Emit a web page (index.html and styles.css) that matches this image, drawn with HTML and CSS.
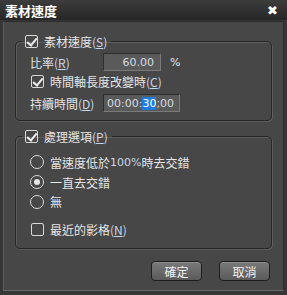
FILE: index.html
```html
<!DOCTYPE html>
<html lang="zh-Hant">
<head>
  <meta charset="UTF-8" />
  <title>素材速度</title>
  <link rel="stylesheet" href="styles.css">
</head>
<body>

<div class="dialog">
  <div class="titlebar">
    <span class="title">素材速度</span>
    <span class="close">&#10006;</span>
  </div>

  <div class="body">
    <!-- speed group -->
    <fieldset class="group group-speed">
      <legend><span class="check on"></span>素材速度<span class="key">(<u>S</u>)</span></legend>
      <div class="row first">
        <span class="label">比率<span class="key">(<u>R</u>)</span></span>
        <span class="field rate">60.00</span>
        <span class="unit">%</span>
      </div>
      <div class="row check-row">
        <span class="check on"></span>時間軸長度改變時<span class="key">(<u>C</u>)</span>
      </div>
      <div class="row">
        <span class="label">持續時間<span class="key">(<u>D</u>)</span></span>
        <span class="field time">00:00:<span class="sel">30</span>;00</span>
      </div>
    </fieldset>

    <!-- processing group -->
    <fieldset class="group group-proc">
      <legend><span class="check on"></span>處理選項<span class="key">(<u>P</u>)</span></legend>
      <div class="opt first"><span class="radio"></span>當速度低於<span class="num">100%</span>時去交錯</div>
      <div class="opt"><span class="radio on"></span>一直去交錯</div>
      <div class="opt"><span class="radio"></span>無</div>
      <div class="opt last"><span class="check"></span>最近的影格<span class="key">(<u>N</u>)</span></div>
    </fieldset>

    <div class="buttons">
      <button>確定</button>
      <button>取消</button>
    </div>
  </div>
</div>

</body>
</html>
```

FILE: styles.css
```css
html, body {
  margin: 0;
  padding: 0;
  background-color: #3a3a3a;
  font-family: "Noto Sans CJK TC", "Noto Sans", sans-serif;
  font-size: 12px;
  color: #e6e6e6;
}
.dialog {
  width: 287px;
  height: 295px;
  background-color: #363636;
  display: flex;
  flex-direction: column;
  box-sizing: border-box;
  border-radius: 4px 4px 0 0;
  overflow: hidden;
}
.titlebar {
  height: 20px;
  flex-shrink: 0;
  display: flex;
  align-items: center;
  justify-content: space-between;
  padding: 0 9px 0 5px;
  background: linear-gradient(#3c3c3c, #262626);
}
.title {
  font-weight: bold;
  font-size: 13px;
  color: #fff;
}
.close {
  font-size: 13px;
  font-weight: bold;
  color: #fff;
  font-family: "DejaVu Sans", sans-serif;
}
.body {
  flex-grow: 1;
  margin: 1px 3px 4px 3px;
  background-color: #474747;
  border-left: 1px solid #5e5e5e;
  border-bottom: 1px solid #6a6a6a;
  border-top: 1px solid #2c2c2c;
  border-right: 1px solid #2c2c2c;
  padding: 11px 11px 0 11px;
  display: flex;
  flex-direction: column;
}
.group {
  margin: 0;
  padding: 0 0 0 14px;
  border: 1px solid #262626;
  box-shadow: 1px 1px 0 #5e5e5e, inset 1px 1px 0 #5e5e5e;
  border-radius: 5px;
}
.group legend {
  padding: 0 4px 0 3px;
  margin-left: -8px;
  display: flex;
  align-items: center;
  height: 16px;
}
.group-speed {
  height: 86px;
}
.group-proc {
  margin-top: 7px;
  height: 119px;
}
.key {
  color: #c9d6ea;
}
.key u {
  text-decoration-thickness: 1px;
}
.check {
  width: 11px;
  height: 11px;
  border: 1px solid #d8d8d8;
  border-radius: 2px;
  margin-right: 6px;
  position: relative;
  flex-shrink: 0;
}
.check.on::after {
  content: "";
  position: absolute;
  left: 3px;
  top: 0px;
  width: 4px;
  height: 8px;
  border: solid #ececec;
  border-width: 0 2px 2px 0;
  transform: rotate(40deg);
}
.row {
  display: flex;
  align-items: center;
  height: 20px;
  margin-top: 3px;
}
.row.first {
  margin-top: 3px;
}
.row.check-row {
  height: 18px;
  margin-top: 0;
  padding-left: 1px;
}
.label {
  width: 73px;
}
.field {
  height: 18px;
  box-sizing: border-box;
  border: 1px solid #2e2e2e;
  border-right-color: #7a7a7a;
  border-bottom-color: #7a7a7a;
  background-color: #5a5a5a;
  color: #d6dbe2;
  display: flex;
  align-items: center;
  font-family: "DejaVu Sans", sans-serif;
  font-size: 11px;
}
.rate {
  width: 58px;
  justify-content: flex-end;
  padding-right: 6px;
}
.time {
  width: 77px;
  padding-left: 3px;
}
.sel {
  background-color: #1e7be0;
  color: #fff;
}
.unit {
  margin-left: 9px;
  font-family: "DejaVu Sans", sans-serif;
  font-size: 11px;
}
.opt {
  display: flex;
  align-items: center;
  height: 20px;
}
.opt.first {
  margin-top: 8px;
}
.opt:nth-of-type(3) {
  height: 19px;
}
.opt.last {
  margin-top: 8px;
}
.opt.last .check {
  margin-left: 1px;
}
.radio {
  width: 12px;
  height: 12px;
  border: 1px solid #d8d8d8;
  border-radius: 50%;
  margin-right: 6px;
  position: relative;
}
.radio.on::after {
  content: "";
  position: absolute;
  left: 3px;
  top: 3px;
  width: 6px;
  height: 6px;
  border-radius: 50%;
  background-color: #e6e6e6;
}
.num {
  font-family: "DejaVu Sans", sans-serif;
  font-size: 11px;
  color: #c9d6ea;
}
.buttons {
  display: flex;
  justify-content: flex-end;
  gap: 17px;
  margin-top: auto;
  margin-right: 2px;
  margin-bottom: 9px;
}
button {
  width: 51px;
  height: 20px;
  border: 1px solid #1e1e1e;
  border-radius: 4px;
  background: linear-gradient(#7a7a7a, #5a5a5a);
  box-shadow: inset 0 1px 0 #8c8c8c;
  color: #f0f0f0;
  font-family: "Noto Sans CJK TC", sans-serif;
  font-size: 12px;
  padding: 0;
}
```
